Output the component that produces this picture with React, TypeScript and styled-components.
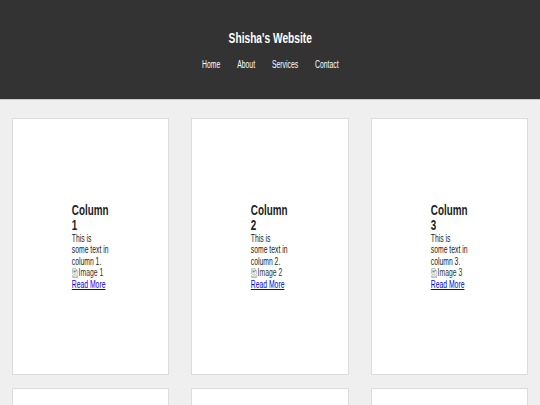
import React from 'react';
import styled, { createGlobalStyle, css } from 'styled-components';

const GlobalStyle = createGlobalStyle`
  html, body {
    margin: 0;
    padding: 0;
    background: #efefef;
    font-family: "Liberation Sans", Arial, sans-serif;
  }
`;

// the reference text is a horizontally squeezed Arial
const squeezed = css`
  transform: scaleX(0.68);
`;

const Header = styled.header`
  background: #333;
  color: #fff;
  padding: 29px 0 28px;
  border-bottom: 1px solid #c8c8c8;
  display: flex;
  flex-direction: column;
  align-items: center;
  gap: 13px;
`;

const Title = styled.h1`
  ${squeezed};
  margin: 0;
  font-size: 15px;
  font-weight: bold;
  line-height: 17px;
`;

const Nav = styled.nav`
  ${squeezed};
  display: flex;
  gap: 25px;
`;

const NavLink = styled.a`
  color: #fff;
  text-decoration: none;
  font-size: 10px;
  line-height: 12px;
`;

const Grid = styled.main`
  display: grid;
  grid-template-columns: repeat(3, 1fr);
  gap: 13px 22px;
  padding: 18px 12px;
`;

const Card = styled.section`
  box-sizing: border-box;
  height: 257px;
  background: #fff;
  border: 1px solid #dcdcdc;
  display: flex;
  align-items: center;
  justify-content: center;
`;

const Content = styled.div`
  ${squeezed};
  width: 55px;
  color: #222;
`;

const Heading = styled.h2`
  margin: 0;
  font-size: 14.5px;
  line-height: 15px;
  font-weight: bold;
`;

const Text = styled.p`
  margin: 0;
  font-size: 10px;
  line-height: 11.5px;
`;

const Broken = styled.span`
  display: flex;
  align-items: center;
  font-size: 10px;
  line-height: 11.5px;
  color: #333;

  svg {
    flex: none;
  }
`;

const More = styled.a`
  display: block;
  font-size: 10px;
  line-height: 11.5px;
  color: #0000ee;
  text-decoration: underline;
`;

const BrokenIcon = () => (
  <svg width="10" height="10" viewBox="0 0 16 16">
    <path d="M2 1h8l4 4v4l-3 2-3-2-3 2-3-2z" fill="#f4f4f4" stroke="#8a8a8a" strokeWidth="1" />
    <path d="M2 12l3 2 3-2 3 2 3-2v3H2z" fill="#f4f4f4" stroke="#8a8a8a" strokeWidth="1" />
    <rect x="4" y="4" width="5" height="3" fill="#5aa05a" />
    <circle cx="10.5" cy="4.5" r="1.2" fill="#4a7fd0" />
  </svg>
);

const columns = [1, 2, 3, 4, 5, 6];

export default function App() {
  return (
    <>
      <GlobalStyle />
      <Header>
        <Title>Shisha's Website</Title>
        <Nav>
          <NavLink href="#">Home</NavLink>
          <NavLink href="#">About</NavLink>
          <NavLink href="#">Services</NavLink>
          <NavLink href="#">Contact</NavLink>
        </Nav>
      </Header>
      <Grid>
        {columns.map((n) => (
          <Card key={n}>
            <Content>
              <Heading>Column {n}</Heading>
              <Text>This is some text in column {n}.</Text>
              <Broken>
                <BrokenIcon />
                Image {n}
              </Broken>
              <More href="#">Read More</More>
            </Content>
          </Card>
        ))}
      </Grid>
    </>
  );
}
